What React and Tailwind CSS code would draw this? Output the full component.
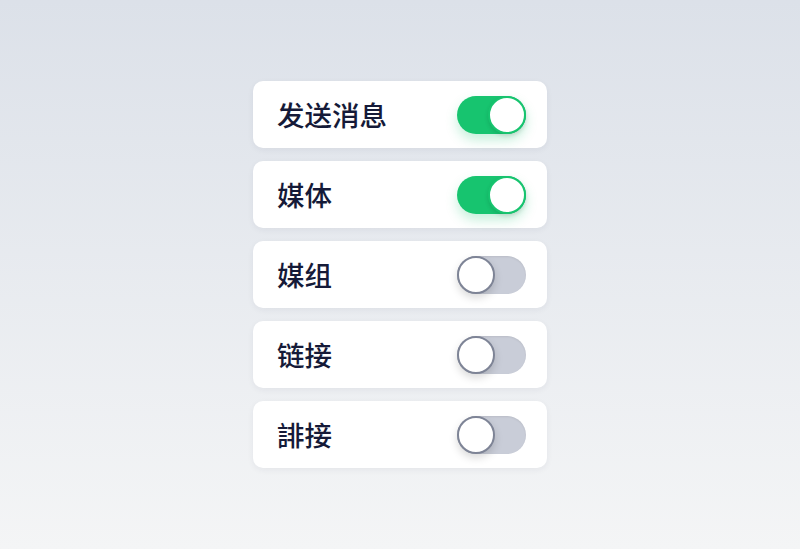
import React, { useState } from "react";

const items = [
  { label: "发送消息", on: true },
  { label: "媒体", on: true },
  { label: "媒组", on: false },
  { label: "链接", on: false },
  { label: "誹接", on: false },
];

function Toggle({ on, onClick }) {
  return (
    <button
      onClick={onClick}
      className={
        "flex h-[38px] w-[69px] items-center rounded-full p-0 " +
        (on
          ? "justify-end bg-[#17c46f] shadow-[0_6px_12px_rgba(23,196,111,0.25)]"
          : "justify-start bg-[#c9cdd8] shadow-[inset_0_1px_2px_rgba(0,0,0,0.08)]")
      }
    >
      <span
        className={
          "block h-[38px] w-[38px] rounded-full border-2 bg-white " +
          (on
            ? "border-[#17c46f] shadow-[0_2px_4px_rgba(0,0,0,0.12)]"
            : "border-[#7e8496] shadow-[0_4px_8px_rgba(0,0,0,0.15)]")
        }
      />
    </button>
  );
}

export default function App() {
  const [state, setState] = useState(items.map((i) => i.on));

  return (
    <div
      className="flex h-[549px] w-full items-start justify-center bg-gradient-to-b from-[#dce1e9] to-[#f4f5f6] pt-[81px]"
      style={{ fontFamily: '"Noto Sans CJK SC", "Noto Sans", sans-serif' }}
    >
      <div className="flex w-[294px] flex-col gap-[13px]">
        {items.map((item, i) => (
          <div
            key={item.label}
            className="flex h-[67px] items-center justify-between rounded-[10px] bg-white pl-[24px] pr-[21px] shadow-[0_2px_6px_rgba(30,40,70,0.06)]"
          >
            <span className="text-[27.5px] font-medium leading-none text-[#151a38]">
              {item.label}
            </span>
            <Toggle
              on={state[i]}
              onClick={() =>
                setState((s) => s.map((v, j) => (j === i ? !v : v)))
              }
            />
          </div>
        ))}
      </div>
    </div>
  );
}
